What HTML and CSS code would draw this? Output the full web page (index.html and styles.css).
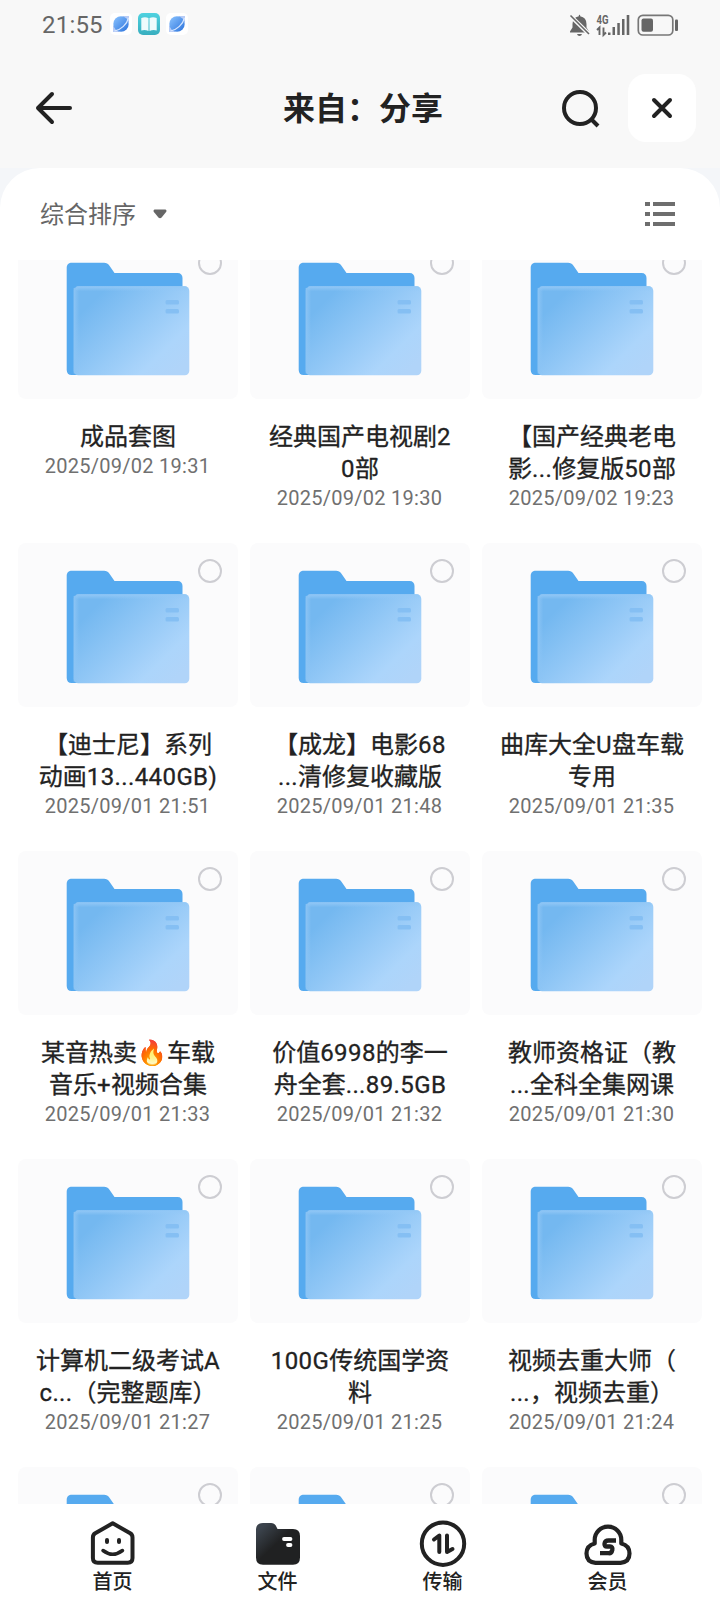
FILE: index.html
```html
<!DOCTYPE html>
<html lang="zh-CN">
<head>
    <meta charset="UTF-8">
    <meta name="viewport" content="width=device-width, initial-scale=1.0">
    <title>来自：分享</title>
    <link rel="stylesheet" href="styles.css">
</head>
<body>
    <!-- shared icons -->
    <svg width="0" height="0" class="defs">
        <defs>
            <linearGradient id="front" gradientUnits="userSpaceOnUse" x1="33" y1="33" x2="110" y2="110">
                <stop offset="0" stop-color="#74b8f0"/>
                <stop offset="0.78" stop-color="#acd5fb"/>
                <stop offset="1" stop-color="#b0d4f9"/>
            </linearGradient>
            <linearGradient id="edge" x1="0" y1="0" x2="1" y2="0">
                <stop offset="0" stop-color="#8cc4f4"/>
                <stop offset="1" stop-color="#8cc4f4" stop-opacity="0"/>
            </linearGradient>
            <linearGradient id="edgeTop" x1="0" y1="0" x2="0" y2="1">
                <stop offset="0" stop-color="#93c8f6"/>
                <stop offset="1" stop-color="#93c8f6" stop-opacity="0"/>
            </linearGradient>
            <linearGradient id="dark" x1="0" y1="0" x2="1" y2="1">
                <stop offset="0.12" stop-color="#3b434c"/>
                <stop offset="0.48" stop-color="#202122"/>
            </linearGradient>
            <linearGradient id="planet" x1="0" y1="0" x2="1" y2="1">
                <stop offset="0" stop-color="#8cc4ff"/>
                <stop offset="1" stop-color="#2a72dc"/>
            </linearGradient>
            <linearGradient id="teal" x1="0" y1="0" x2="0" y2="1">
                <stop offset="0" stop-color="#4fd2e0"/>
                <stop offset="1" stop-color="#38aebf"/>
            </linearGradient>
            <symbol id="i-folder" viewBox="0 0 124 114">
                <path d="M0.7 6C0.7 2.5 2.7.7 6 .7H38C40.500.7 42 1.500 43.300 3.400L48.500 11H111.500C114.800 11 116.500 13 116.500 16V60L20 113H5.500C2.500 113 .7 111 .7 108Z" fill="#56aaef"/>
                <rect x="7.700" y="24.300" width="115.600" height="88.900" rx="4.500" fill="url(#front)"/>
                <rect x="7.700" y="26" width="5.500" height="85.500" fill="url(#edge)"/>
                <rect x="9.500" y="24.300" width="112" height="5" rx="2.500" fill="url(#edgeTop)"/>
                <rect x="99.500" y="38" width="13.500" height="4.600" rx="1.500" fill="#85bff3"/>
                <rect x="99.500" y="47" width="13.500" height="4.600" rx="1.500" fill="#85bff3"/>
            </symbol>
            <symbol id="i-planet" viewBox="0 0 22 22">
                <rect width="22" height="22" rx="5" fill="#fff"/>
                <path d="M3 19V13L13 3H19V9L9 19Z" fill="#b8ccf6"/>
                <circle cx="11" cy="11" r="7.700" fill="url(#planet)"/>
                <path d="M4.500 18C11 17 17 11 18.500 5" fill="none" stroke="#d7e7ff" stroke-width="1.200"/>
            </symbol>
        </defs>
    </svg>

    <div class="status-bar">
        <span class="time">21:55</span>
        <svg class="app-icon" viewBox="0 0 22 22"><use href="#i-planet"/></svg>
        <svg class="app-icon" viewBox="0 0 22 22">
            <rect width="22" height="22" rx="5" fill="url(#teal)"/>
            <path d="M3.300 5Q7 3.500 10.500 5V18Q7 16.500 3.300 17.500ZM11.500 5Q15 3.500 18.700 5V17.500Q15 16.500 11.500 18Z" fill="#eefbfc"/>
        </svg>
        <svg class="app-icon" viewBox="0 0 22 22"><use href="#i-planet"/></svg>

        <svg class="status-icons" viewBox="0 0 110 24" fill="#666">
            <path d="M9.800 2.200V1.700Q9.800.7 10.500.7T11.200 1.700V2.200Q17.500 3.500 17.500 10V13.500L20 17.500V18.500H1V17.500L3.500 13.500V10Q3.500 3.500 9.800 2.200ZM8 20H13Q12.500 22 10.500 22T8 20Z"/>
            <path d="M1 1.500L20 20" stroke="#f8f8f8" stroke-width="4"/>
            <path d="M1.500 1.500L20 20" stroke="#666" stroke-width="1.600"/>
            <text x="27.500" y="10" class="net" textLength="12" lengthAdjust="spacingAndGlyphs">4G</text>
            <path d="M28 16L30.500 13.500V21M34.500 13.500V21L37 18.500" fill="none" stroke="#666" stroke-width="1.900"/>
            <path d="M39 18.500h2.500V21H39ZM43.500 13h2.500v8h-2.500ZM48.300 9h2.500v12h-2.500ZM53 5h2.500v16H53ZM57.700 1h2.600v20h-2.600Z"/>
            <rect x="69.300" y="1.300" width="34.500" height="19.700" rx="4.500" fill="none" stroke="#777" stroke-width="1.700"/>
            <rect x="72.500" y="4.500" width="11.500" height="13.300" rx="2"/>
            <rect x="106" y="5.500" width="3" height="11.500" rx="1"/>
        </svg>
    </div>

    <div class="header">
        <svg class="back" viewBox="0 0 40 40"><path d="M18 6L4 20L18 34M4 20H36" fill="none" stroke="#222" stroke-width="4" stroke-linecap="round" stroke-linejoin="round"/></svg>
        <h1>来自：分享</h1>
        <svg class="search" viewBox="0 0 40 40"><circle cx="18" cy="20" r="16" fill="none" stroke="#222" stroke-width="4"/><path d="M29.500 31.500L36 38" stroke="#222" stroke-width="4"/></svg>
        <div class="close">
            <svg viewBox="0 0 24 24"><path d="M4 4L20 20M20 4L4 20" stroke="#222" stroke-width="4" stroke-linecap="round"/></svg>
        </div>
    </div>

    <div class="panel">
        <div class="toolbar">
            <span>综合排序</span>
            <svg class="caret" viewBox="0 0 14 10"><path d="M1.500.500H12.500Q14 1 13.300 2.800L8.600 8.600Q7 10 5.400 8.600L.700 2.800Q0 1 1.500.500Z" fill="#666"/></svg>
            <svg class="list-icon" viewBox="0 0 30 24"><path d="M0 2H5M8 2H30M0 12H5M8 12H30M0 22H5M8 22H30" stroke="#6e6e6e" stroke-width="3.800"/></svg>
        </div>
        <div class="file-list">
            <div class="grid" id="grid"></div>
        </div>
    </div>

    <div class="tab-bar">
        <div class="tab">
            <svg viewBox="0 0 48 48" fill="none" stroke="#222" stroke-linecap="round" stroke-linejoin="round">
                <path d="M23.700 4.300L41.200 14.300Q43.500 15.700 43.500 18.500V39Q43.500 43.800 38.700 43.800H8.700Q3.900 43.800 3.900 39V18.500Q3.900 15.700 6.200 14.300Z" stroke-width="4"/>
                <path d="M14 31.500Q23.700 39 33.500 31.500" stroke-width="3.500"/>
                <path d="M18 21V23M30 21V23" stroke-width="4"/>
            </svg>
            <span>首页</span>
        </div>
        <div class="tab">
            <svg viewBox="0 0 48 48">
                <path d="M2 11Q2 4 9 4H17Q21 4 22.500 8L23.500 10H39Q46 10 46 17V38.500Q46 45.800 39 45.800H9Q2 45.800 2 38.500Z" fill="url(#dark)"/>
                <path d="M30 20H36.500M34 26H36.500" stroke="#fff" stroke-width="3.800" stroke-linecap="round"/>
            </svg>
            <span>文件</span>
        </div>
        <div class="tab">
            <svg viewBox="0 0 48 48" fill="none" stroke="#222">
                <circle cx="24" cy="24.700" r="21.200" stroke-width="4"/>
                <path d="M15 20.500L20.300 16.500V33M28 16.500V33L33.500 30" stroke-width="4" stroke-linecap="round" stroke-linejoin="round"/>
            </svg>
            <span>传输</span>
        </div>
        <div class="tab">
            <svg viewBox="0 0 48 48" fill="none" stroke="#222">
                <path d="M11.500 43.800Q2.500 43 2.500 34.500Q2.500 26.500 10.700 24.500V21A13.300 13.300 0 0 1 37.300 21V24.500Q45.500 26.500 45.500 34.500Q45.500 43 36.500 43.800Z" stroke-width="4.200" stroke-linejoin="round"/>
                <path d="M32 21.500H24.500Q21 21.500 20.500 24.500T23 27.500H26Q29 27.500 28.300 31T24.500 34.200H16" stroke-width="4.300"/>
            </svg>
            <span>会员</span>
        </div>
    </div>

    <script>
        const files = [
            { name: ["成品套图"], date: "2025/09/02 19:31" },
            { name: ["经典国产电视剧2", "0部"], date: "2025/09/02 19:30" },
            { name: ["【国产经典老电", "影...修复版50部"], date: "2025/09/02 19:23" },
            { name: ["【迪士尼】系列", "动画13...440GB)"], date: "2025/09/01 21:51" },
            { name: ["【成龙】电影68", "...清修复收藏版"], date: "2025/09/01 21:48" },
            { name: ["曲库大全U盘车载", "专用"], date: "2025/09/01 21:35" },
            { name: ["某音热卖🔥车载", "音乐+视频合集"], date: "2025/09/01 21:33" },
            { name: ["价值6998的李一", "舟全套...89.5GB"], date: "2025/09/01 21:32" },
            { name: ["教师资格证（教", "...全科全集网课"], date: "2025/09/01 21:30" },
            { name: ["计算机二级考试A", "c...（完整题库）"], date: "2025/09/01 21:27" },
            { name: ["100G传统国学资", "料"], date: "2025/09/01 21:25" },
            { name: ["视频去重大师（", "...，视频去重）"], date: "2025/09/01 21:24" },
            { name: [], date: "" },
            { name: [], date: "" },
            { name: [], date: "" }
        ];

        // latin letters and digits get a little more spacing
        function formatLine(line) {
            return line.replace(/[\x21-\x7e]+/g, '<span class="latin">$&</span>');
        }

        document.getElementById("grid").innerHTML = files.map(file => `
            <div class="file">
                <div class="thumb">
                    <svg class="folder"><use href="#i-folder"/></svg>
                    <span class="check"></span>
                </div>
                <div class="name">${file.name.map(formatLine).join("<br>")}</div>
                <div class="date">${file.date}</div>
            </div>
        `).join("");
    </script>
</body>
</html>
```
FILE: styles.css
```css
* {
    box-sizing: border-box;
}

body {
    margin: 0;
    width: 720px;
    height: 1612px;
    overflow: hidden;
    display: flex;
    flex-direction: column;
    background: #f4f6f9;
    color: #222;
    font-family: Roboto, "Noto Sans CJK SC", sans-serif;
    text-spacing-trim: space-all;
}

svg {
    display: block;
    flex-shrink: 0;
}

.defs {
    position: absolute;
}

.status-bar {
    height: 48px;
    padding: 0 41px 0 42px;
    display: flex;
    align-items: center;
    background: #f8f8f8;
    color: #666;
}

.time {
    width: 68px;
    padding-top: 1px;
    font-size: 24px;
    letter-spacing: 0.2px;
}

.app-icon {
    width: 22px;
    height: 22px;
    margin-right: 6px;
}

.status-icons {
    width: 110px;
    height: 24px;
    margin-left: auto;
    margin-top: 3px;
    overflow: visible;
}

.net {
    font-size: 12.5px;
    font-weight: bold;
}

.header {
    height: 120px;
    padding: 0 24px 0 34px;
    display: flex;
    align-items: center;
    background: #f8f8f8;
}

.back {
    width: 40px;
    height: 40px;
}

.header h1 {
    margin: 0;
    width: 488px;
    padding: 2px 0 0 209px;
    font-size: 32px;
    line-height: 48px;
    font-weight: bold;
    white-space: nowrap;
}

.search {
    width: 40px;
    height: 40px;
}

.close {
    width: 68px;
    height: 68px;
    margin-left: 26px;
    border-radius: 18px;
    background: #fff;
    display: flex;
    align-items: center;
    justify-content: center;
}

.close svg {
    width: 24px;
    height: 24px;
}

.panel {
    height: 1336px;
    background: #fff;
    border-radius: 40px 40px 0 0;
}

.toolbar {
    height: 92px;
    padding: 0 45px 4px 40px;
    display: flex;
    align-items: center;
    font-size: 24px;
    color: #666;
}

.caret {
    width: 14px;
    height: 10px;
    margin: 4px 0 0 17px;
}

.list-icon {
    width: 30px;
    height: 24px;
    margin-left: auto;
    margin-top: 4px;
}

/* scrolled part of the list */
.file-list {
    height: 1244px;
    overflow: hidden;
}

.grid {
    display: grid;
    grid-template-columns: repeat(3, 220px);
    grid-auto-rows: 308px;
    column-gap: 12px;
    margin: -25px 18px 0;
}

.thumb {
    position: relative;
    height: 164px;
    padding: 27px 0 0 48px;
    background: #fbfbfc;
    border-radius: 8px;
}

.folder {
    width: 124px;
    height: 114px;
}

.check {
    position: absolute;
    top: 16px;
    right: 16px;
    width: 24px;
    height: 24px;
    border: 2px solid #cdcdd2;
    border-radius: 50%;
}

.name {
    margin-top: 22px;
    font-size: 24px;
    line-height: 32px;
    text-align: center;
    white-space: nowrap;
    -webkit-text-stroke: 0.3px #222;
}

.latin {
    letter-spacing: 0.4px;
}

.date {
    margin-top: -1px;
    padding-right: 1px;
    font-size: 20px;
    line-height: 28px;
    letter-spacing: 0.27px;
    text-align: center;
    color: #707070;
}

.tab-bar {
    height: 108px;
    padding: 16px 30px 0;
    display: flex;
    background: #fff;
}

.tab {
    flex: 1;
    display: flex;
    flex-direction: column;
    align-items: center;
    font-size: 20px;
    line-height: 28px;
    font-weight: 500;
}

.tab svg {
    width: 48px;
    height: 48px;
    margin-top: -1px;
    margin-bottom: 1px;
}
```
